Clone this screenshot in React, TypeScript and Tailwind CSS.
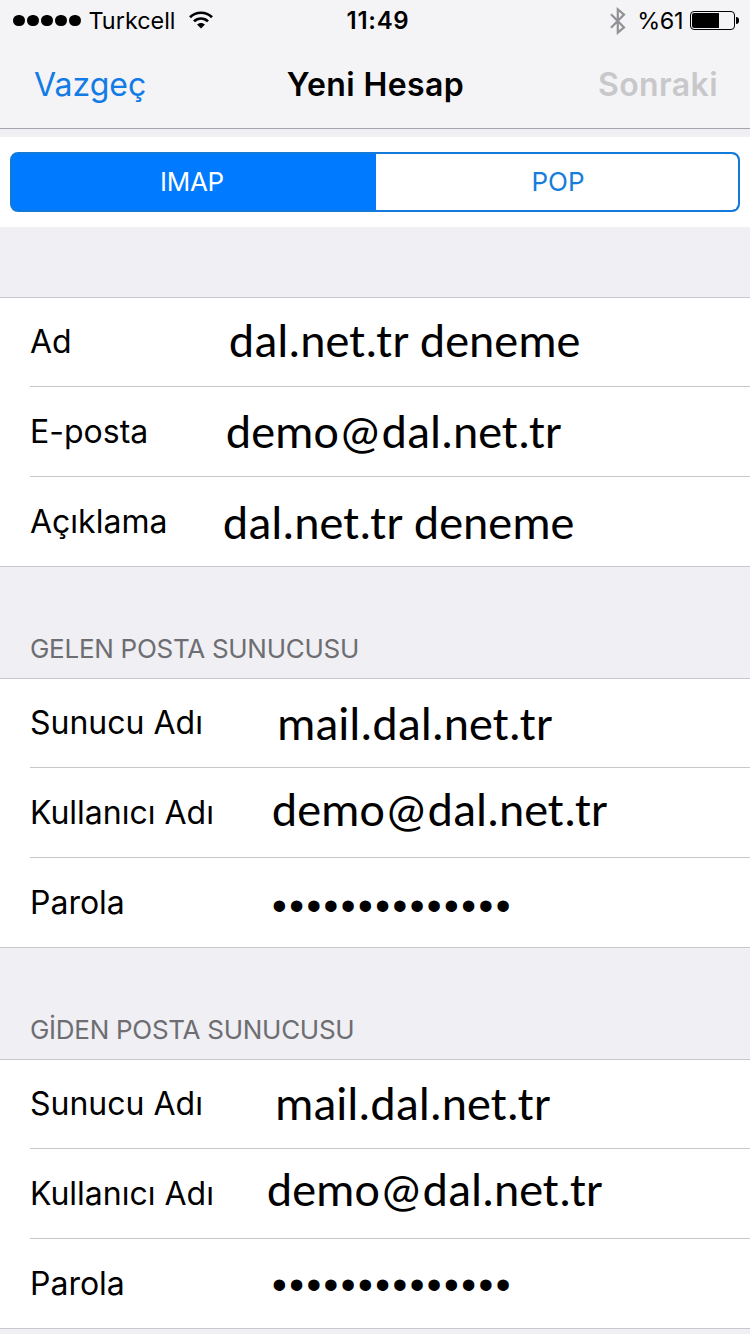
import React, { FC } from "react";

type Field = {
  label: string;
  value: string;
  valueClass: string;
};

type FieldGroupProps = {
  title?: string;
  fields: Field[];
};

const textValue = "font-['Carlito','Lato',sans-serif] text-[48px]";
const secretValue =
  "font-['Liberation_Sans',sans-serif] text-[42px] tracking-[2.5px]";
const password = "•".repeat(14);

const accountFields: Field[] = [
  {
    label: "Ad",
    value: "dal.net.tr deneme",
    valueClass: `${textValue} ml-[9px] pb-[2px]`,
  },
  {
    label: "E-posta",
    value: "demo@dal.net.tr",
    valueClass: `${textValue} ml-[6px]`,
  },
  {
    label: "Açıklama",
    value: "dal.net.tr deneme",
    valueClass: `${textValue} ml-[3px] pt-[2px]`,
  },
];

const incomingFields: Field[] = [
  {
    label: "Sunucu Adı",
    value: "mail.dal.net.tr",
    valueClass: `${textValue} ml-[57px] pt-[2px]`,
  },
  {
    label: "Kullanıcı Adı",
    value: "demo@dal.net.tr",
    valueClass: `${textValue} ml-[52px] pb-[6px]`,
  },
  {
    label: "Parola",
    value: password,
    valueClass: `${secretValue} ml-[52px] pt-[6px]`,
  },
];

const outgoingFields: Field[] = [
  {
    label: "Sunucu Adı",
    value: "mail.dal.net.tr",
    valueClass: `${textValue} ml-[55px]`,
  },
  {
    label: "Kullanıcı Adı",
    value: "demo@dal.net.tr",
    valueClass: `${textValue} ml-[47px] pb-[7px]`,
  },
  {
    label: "Parola",
    value: password,
    valueClass: `${secretValue} ml-[52px] pt-[3px]`,
  },
];

const StatusBar: FC = () => (
  <div className="grid h-10 grid-cols-3 items-center pl-[13px] pr-[11px] pt-[2px] leading-none">
    <div className="flex items-center">
      <div className="mb-px flex gap-[2.5px]">
        {[0, 1, 2, 3, 4].map((dot) => (
          <span key={dot} className="size-[11.5px] rounded-full bg-black" />
        ))}
      </div>
      <span className="ml-[8px] text-[23.4px]">Turkcell</span>
      <svg
        viewBox="0 0 24 18"
        fill="none"
        stroke="#000"
        strokeWidth="2.7"
        className="mb-[2px] ml-[13px] h-[18px] w-6"
      >
        <path d="M1 6.3C7.2 .2 16.8 .2 23 6.3" />
        <path d="M5 10.4c4-3.9 10-3.9 14 0" />
        <path
          d="M8 13.6c2.3-2.1 5.7-2.1 8 0L12 17.6Z"
          fill="#000"
          stroke="none"
        />
      </svg>
    </div>

    <span className="pl-1 text-center text-[24px] font-semibold tracking-[0.7px]">
      11:49
    </span>

    <div className="flex items-center justify-end">
      <svg
        viewBox="0 0 16 28"
        fill="none"
        stroke="#929296"
        strokeWidth="2.2"
        className="mb-px h-7 w-4"
      >
        <path d="M1 7.2 14 20.4 7.8 25.6V2.4L14 7.6 1 20.8" />
      </svg>
      <span className="ml-[11px] text-[23.4px] tracking-[-0.4px]">%61</span>
      <div className="mb-[2px] ml-[7px] flex h-[19px] w-[45px] rounded-[4px] border-[1.5px] border-black p-px">
        <span className="w-[27px] rounded-l-[2px] bg-black" />
      </div>
      <span className="mb-[2px] ml-px h-[7px] w-[3px] rounded-r-full bg-black" />
    </div>
  </div>
);

const FieldGroup: FC<FieldGroupProps> = ({ title, fields }) => (
  <section>
    {title && (
      <h2 className="flex h-[111px] items-end pb-[13px] pl-[30px] text-[26px] leading-8 tracking-[-0.28px] text-[#6d6d72]">
        {title}
      </h2>
    )}
    <div className="border-y border-[#c8c7cc] bg-white">
      {fields.map(({ label, value, valueClass }, index) => (
        <div key={label} className="pl-[30px]">
          <div
            className={`flex items-center ${
              index === 0 ? "h-[88px]" : "h-[90px] border-t border-[#c8c7cc]"
            }`}
          >
            <span className="w-[190px] shrink-0 text-[32px] leading-10">
              {label}
            </span>
            <span className={`whitespace-nowrap leading-[56px] ${valueClass}`}>
              {value}
            </span>
          </div>
        </div>
      ))}
    </div>
  </section>
);

export default function App() {
  return (
    <div className="h-[1334px] w-[750px] overflow-hidden bg-[#efeff4] font-['Inter',sans-serif] text-black">
      <header className="h-[129px] border-b border-[#a4a4ae] bg-[#f4f4f6]">
        <StatusBar />
        <nav className="flex h-[88px] items-center justify-between pl-[34px] pr-8 pt-[2px] text-[32px] leading-10">
          <button className="w-[120px] text-left text-[#127be6]">Vazgeç</button>
          <h1 className="font-semibold tracking-[0.4px]">Yeni Hesap</h1>
          <button className="w-[121px] text-right font-semibold tracking-[0.4px] text-[#c8c8ca]">
            Sonraki
          </button>
        </nav>
      </header>

      <div className="mb-[70px] mt-2 flex h-[90px] items-center bg-white px-[10px] text-[26px] leading-8">
        <div className="flex h-[60px] w-full overflow-hidden rounded-[8px] border-2 border-[#147ad9] bg-[#147ad9]">
          <button className="-my-[2px] -ml-[2px] w-[366px] rounded-l-[8px] bg-[#007aff] pr-[2px] tracking-[-0.3px] text-white">
            IMAP
          </button>
          <button className="flex-1 rounded-r-[6px] bg-white pl-[2px] text-[#157ddc]">
            POP
          </button>
        </div>
      </div>

      <FieldGroup fields={accountFields} />
      <FieldGroup title="GELEN POSTA SUNUCUSU" fields={incomingFields} />
      <FieldGroup title="GİDEN POSTA SUNUCUSU" fields={outgoingFields} />
    </div>
  );
}
